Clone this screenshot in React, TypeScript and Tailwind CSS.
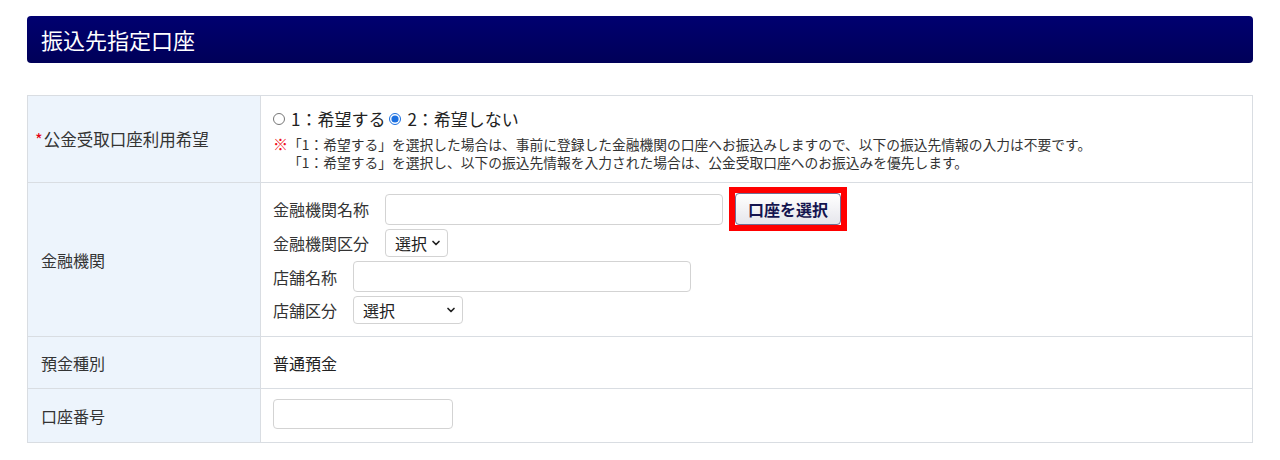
import { ReactNode } from "react";

// Chevron for the select boxes
const Chevron = () => (
  <svg className="w-[10px] h-[10px]" viewBox="0 0 10 10" fill="none">
    <path d="M2 3.5l3 3 3-3" stroke="#222" strokeWidth={1.7} strokeLinecap="round" strokeLinejoin="round" />
  </svg>
);

interface SelectBoxProps {
  className?: string;
}

const SelectBox = ({ className = "" }: SelectBoxProps) => (
  <div
    className={`flex items-center justify-between h-[28px] pl-[9px] pr-[6px] border border-[#d3d3d3] rounded-[4px] bg-white text-[16px] text-[#222] ${className}`}
  >
    <span>選択</span>
    <Chevron />
  </div>
);

const TextBox = ({ className = "" }: { className?: string }) => (
  <input
    type="text"
    className={`border border-[#d3d3d3] rounded-[4px] bg-white outline-none ${className}`}
  />
);

interface RowProps {
  label: ReactNode;
  children: ReactNode;
  bodyClass?: string;
  last?: boolean;
}

const Row = ({ label, children, bodyClass = "", last = false }: RowProps) => (
  <div className={`grid grid-cols-[233px_1fr] ${last ? "" : "border-b border-[#d9dde2]"}`}>
    <div className="flex items-center pl-[13px] bg-[#edf4fc] border-r border-[#d9dde2] text-[16px] text-[#333]">
      {label}
    </div>
    <div className={`pl-[12px] ${bodyClass}`}>{children}</div>
  </div>
);

const Field = ({ label, width, children }: { label: string; width: string; children: ReactNode }) => (
  <div className="flex items-center">
    <span className={`${width} text-[16px] text-[#333]`}>{label}</span>
    {children}
  </div>
);

export default function App() {
  return (
    <div className="min-h-[460px] bg-white px-[27px] pt-[16px] font-['Noto_Sans_CJK_JP',sans-serif] text-[#333]">
      {/* section title */}
      <div className="h-[47px] flex items-center pl-[14px] rounded-[4px] bg-gradient-to-b from-[#000070] to-[#000058] text-white text-[22px]">
        振込先指定口座
      </div>

      <div className="mt-[32px] border border-[#d9dde2]">
        <Row
          label={
            <span className="text-[16.5px]">
              <span className="text-[#e60012] -ml-[6px] mr-[1px]">*</span>公金受取口座利用希望
            </span>
          }
          bodyClass="pt-[12px] pb-[11px]"
        >
          <div className="flex items-center h-[22px] text-[17px] text-[#222]">
            <label className="flex items-center gap-[6px]">
              <input type="radio" name="koukin" className="w-[12px] h-[12px] m-0 accent-[#1a6fe0]" />
              <span>1：希望する</span>
            </label>
            <label className="flex items-center gap-[6px] ml-[4px]">
              <input type="radio" name="koukin" defaultChecked className="w-[12px] h-[12px] m-0 accent-[#1a6fe0]" />
              <span>2：希望しない</span>
            </label>
          </div>
          <div className="mt-[5px] flex text-[13.75px] leading-[18px] text-[#333]">
            <span className="text-[#f01020] font-bold text-[15px] leading-[18px] w-[15px] shrink-0">※</span>
            <div>
              <p>「1：希望する」を選択した場合は、事前に登録した金融機関の口座へお振込みしますので、以下の振込先情報の入力は不要です。</p>
              <p>「1：希望する」を選択し、以下の振込先情報を入力された場合は、公金受取口座へのお振込みを優先します。</p>
            </div>
          </div>
        </Row>

        <Row label="金融機関" bodyClass="pt-[10px] pb-[12px] flex flex-col gap-[4px]">
          <Field label="金融機関名称" width="w-[112px]">
            <TextBox className="w-[338px] h-[31px]" />
            {/* red frame highlighting the account picker */}
            <span className="relative ml-[12px]">
              <button className="block w-[106px] h-[32px] rounded-[4px] border border-[#6f6f95] bg-gradient-to-b from-white to-[#e6e6ec] text-[16px] font-bold text-[#14144f]">
                口座を選択
              </button>
              <span className="pointer-events-none absolute -inset-[6px] border-[6px] border-[#ff0000]" />
            </span>
          </Field>
          <Field label="金融機関区分" width="w-[112px]">
            <SelectBox className="w-[63px]" />
          </Field>
          <Field label="店舗名称" width="w-[80px]">
            <TextBox className="w-[338px] h-[31px]" />
          </Field>
          <Field label="店舗区分" width="w-[80px]">
            <SelectBox className="w-[110px]" />
          </Field>
        </Row>

        <Row label="預金種別" bodyClass="h-[51px] flex items-center text-[16px] text-[#222]">
          普通預金
        </Row>

        <Row label="口座番号" bodyClass="pt-[10px] pb-[13px]" last>
          <TextBox className="block w-[180px] h-[30px]" />
        </Row>
      </div>
    </div>
  );
}
